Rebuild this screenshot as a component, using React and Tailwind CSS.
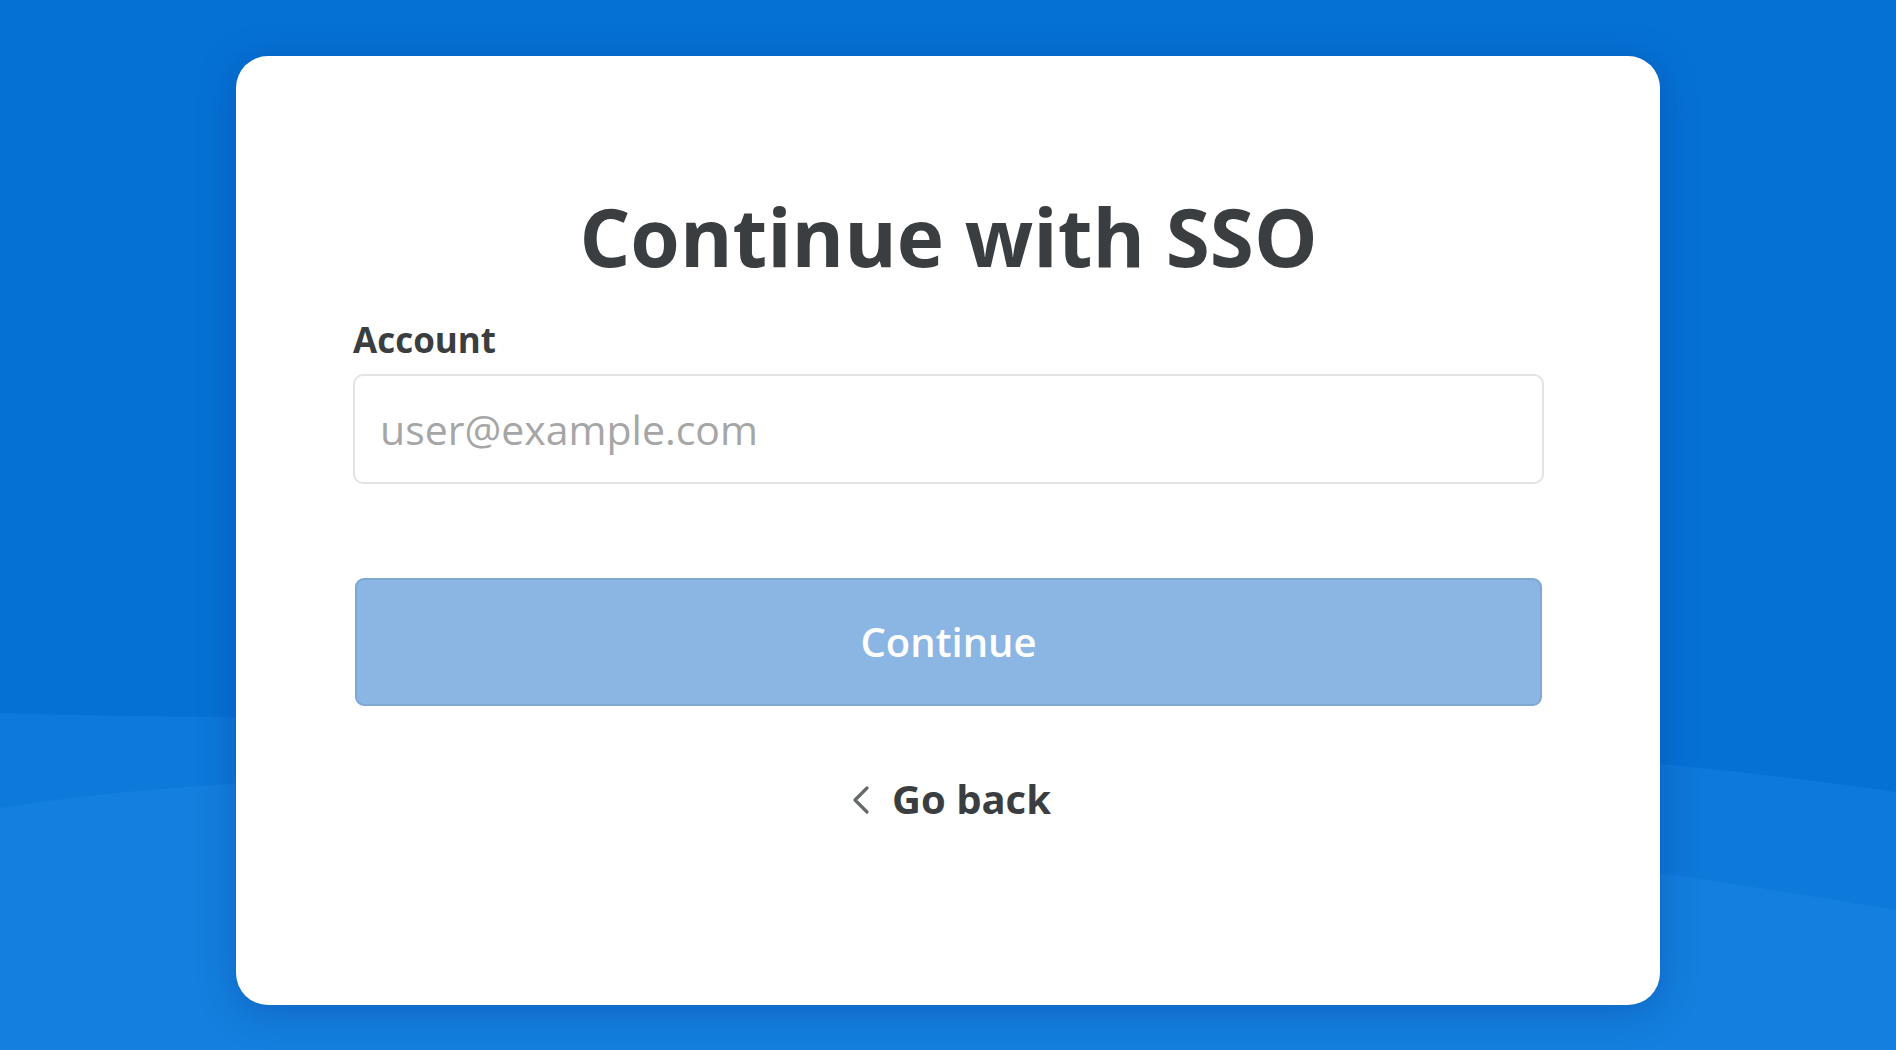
export default function App() {
  return (
    <div className="relative h-[1050px] w-full overflow-hidden bg-[#0671d4] font-['Open_Sans','Noto_Sans',sans-serif]">
      {/* background waves */}
      <svg className="absolute inset-0 h-full w-full" viewBox="0 0 1896 1050" preserveAspectRatio="none">
        <path d="M0 713 C 500 728, 1250 700, 1896 792 L 1896 1050 L 0 1050 Z" fill="#0d79da" />
        <path d="M0 808 C 320 755, 1000 760, 1896 910 L 1896 1050 L 0 1050 Z" fill="#147fde" />
      </svg>

      <div className="relative flex justify-center pt-[56px]">
        <div className="flex h-[949px] w-[1424px] flex-col rounded-[32px] bg-white pl-[117px] pr-[116px] pt-[132px] shadow-[0_6px_36px_rgba(10,50,140,0.35)]">
          <h1 className="text-center text-[80px] font-bold leading-[96px] text-[#3b3e40]">
            Continue with SSO
          </h1>

          <label className="mt-[36px] block text-[35px] font-bold leading-[40px] text-[#3b3e40]">
            Account
          </label>
          <input
            type="text"
            placeholder="user@example.com"
            className="mt-[14px] h-[110px] w-full rounded-[10px] border-2 border-[#e3e3e3] bg-white px-[25px] text-[41px] text-[#3b3e40] outline-none placeholder:text-[#a6a6a6]"
          />

          <button className="mx-[2px] mt-[94px] h-[128px] rounded-[9px] border-2 border-[#7ea7d4] bg-[#8bb6e3] text-[40px] font-semibold text-white">
            Continue
          </button>

          <div className="mt-[69px] flex items-center justify-center gap-[22px] text-[#3b3e40]">
            <svg width="18" height="28" viewBox="0 0 18 28" className="ml-[6px] mt-[2px]">
              <polyline points="15,2 3,14 15,26" fill="none" stroke="#666a6c" strokeWidth="3.2" strokeLinecap="round" strokeLinejoin="round" />
            </svg>
            <span className="text-[40px] font-bold leading-[48px]">Go back</span>
          </div>
        </div>
      </div>
    </div>
  );
}
